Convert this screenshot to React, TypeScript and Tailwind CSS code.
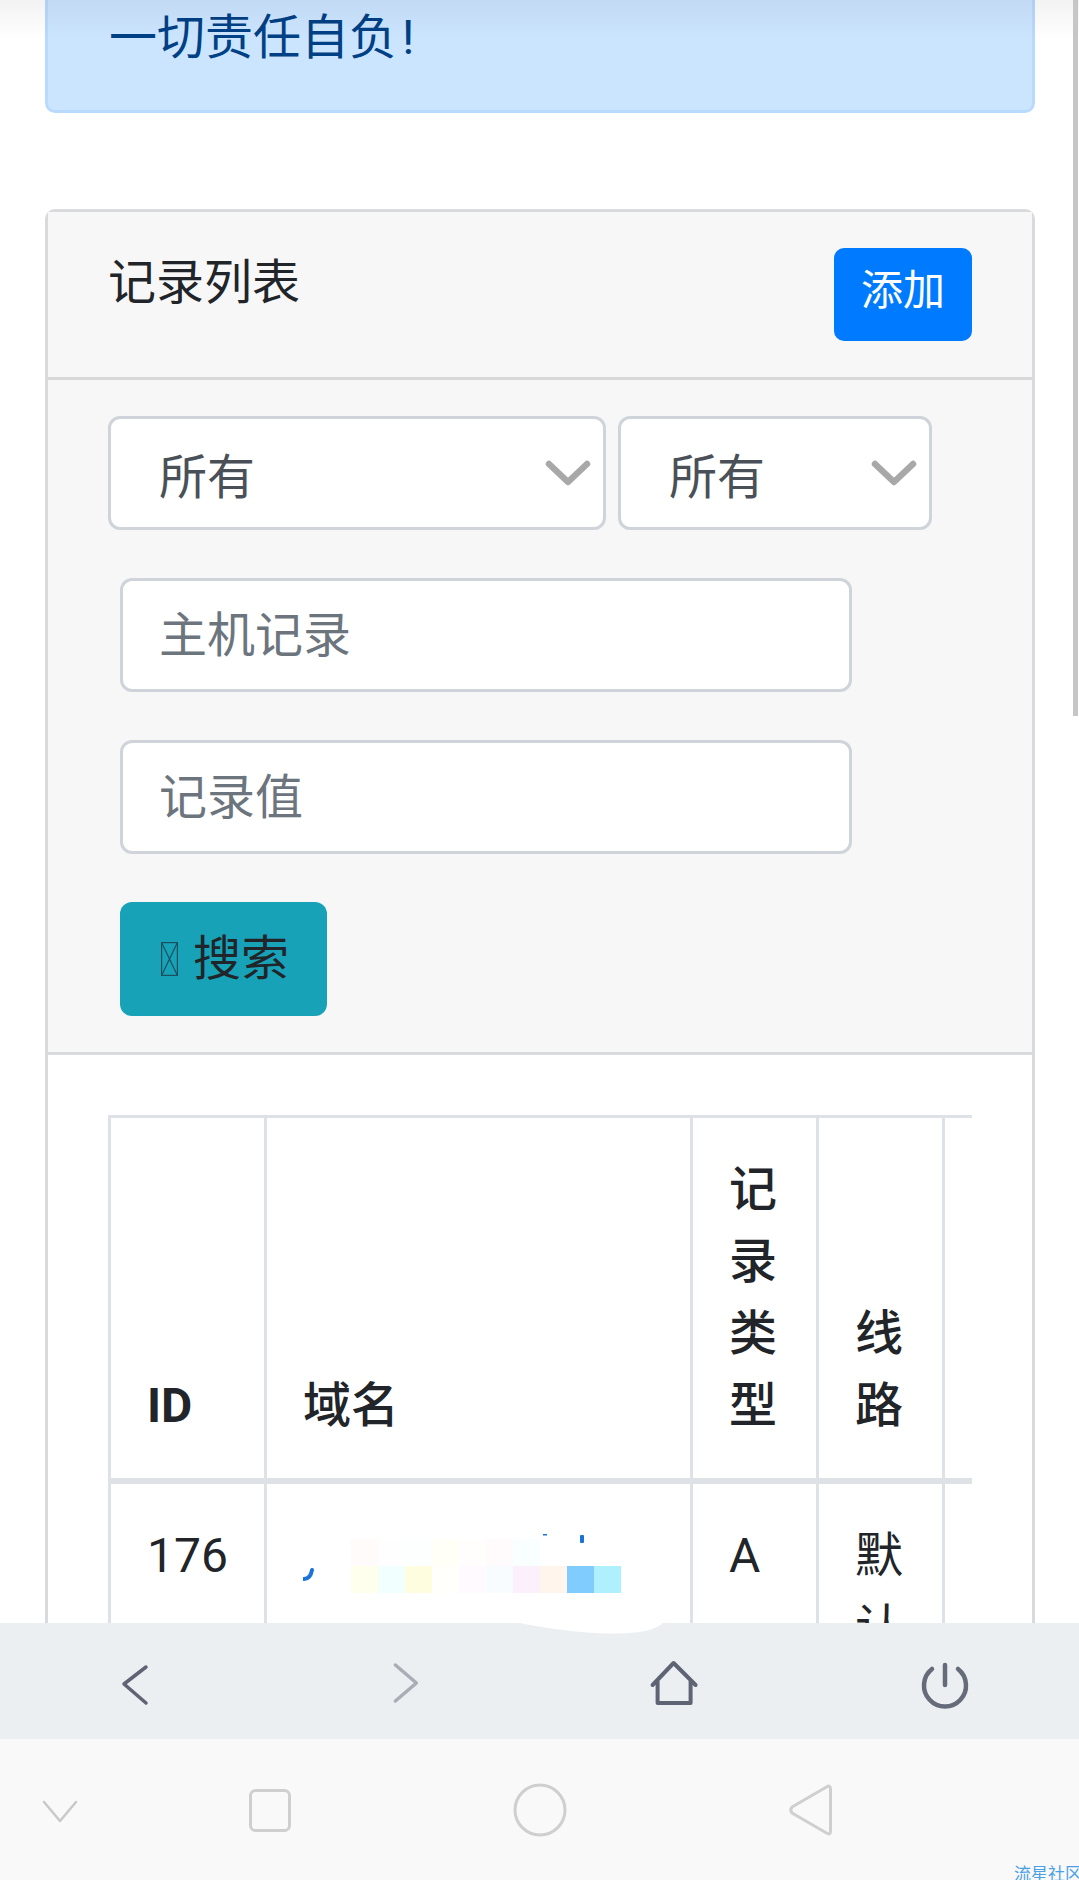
import React from "react";

const Chevron = () => (
  <svg className="pointer-events-none absolute top-[44px] right-[15px]" width="46" height="26" viewBox="0 0 46 26" fill="none">
    <path d="M4 4 L23 22 L42 4" stroke="#a8a8a8" strokeWidth="6.500" strokeLinecap="round" strokeLinejoin="round" />
  </svg>
);

const SelectBox = ({ width }: { width: string }) => (
  <div className={`relative ${width}`}>
    <select className="h-[114px] w-full appearance-none rounded-[12px] border-[3px] border-[#ced4da] bg-white pt-[9px] pl-[48px] text-[48px] leading-[72px] text-[#495057] outline-none">
      <option>所有</option>
    </select>
    <Chevron />
  </div>
);

const TextInput = ({ placeholder }: { placeholder: string }) => (
  <input
    placeholder={placeholder}
    className="ml-[12px] block h-[114px] w-[732px] rounded-[12px] border-[3px] border-[#ced4da] bg-white pl-[36px] text-[48px] text-[#495057] outline-none placeholder:text-[#6c757d]"
  />
);

const mosaic: [number, number, string][] = [
  [47, 19, "#fffbfb"], [74, 19, "#fffefe"], [101, 19, "#fdfffe"], [128, 19, "#fffff8"], [155, 19, "#fffefc"], [182, 19, "#fffbfc"], [209, 19, "#f9ffff"],
  [47, 46, "#ffffee"], [74, 46, "#f1ffff"], [101, 46, "#fffde0"], [128, 46, "#fffffb"], [155, 46, "#fefaff"], [182, 46, "#f8fcff"], [209, 46, "#fdf0fd"], [236, 46, "#fff5ec"], [263, 46, "#80ccff"], [290, 46, "#aef0fd"],
];

export default function App() {
  return (
    <div className="relative flex h-[1880px] w-full flex-col overflow-hidden bg-white [font-family:Roboto,'Noto_Sans_CJK_SC',sans-serif]">
      <main className="h-[1623px] overflow-hidden pr-[44px] pl-[45px]">
        <div className="-mt-[37px] mb-[96px] h-[150px] rounded-[10px] border-[3px] border-[#b8daff] bg-[#cce5ff] px-[61px] py-[36px] text-[48px] leading-[72px] text-[#004085]">
          一切责任自负<span className="ml-[5px]">!</span>
        </div>

        <section className="rounded-[10px] border-[3px] border-[#d8dadd] bg-white">
          <header className="flex items-start justify-between border-b-[3px] border-[#d8d8d8] bg-[#f7f7f7] px-[60px] py-[36px]">
            <h2 className="-mt-px text-[48px] leading-[72px] text-[#212529]">记录列表</h2>
            <button className="h-[93px] w-[138px] rounded-[10px] bg-[#007bff] pb-[9px] text-[42px] text-white">添加</button>
          </header>

          <form className="flex flex-col gap-[48px] border-b-[3px] border-[#d8dadd] bg-[#f7f7f7] pt-[36px] pb-[36px] pl-[60px]">
            <div className="flex gap-[12px]">
              <SelectBox width="w-[498px]" />
              <SelectBox width="w-[314px]" />
            </div>
            <TextInput placeholder="主机记录" />
            <TextInput placeholder="记录值" />
            <button type="button" className="ml-[12px] flex h-[114px] w-[207px] items-center gap-[15px] rounded-[12px] bg-[#17a2b8] pl-[41px] text-[48px] text-[#212529]">
              <svg width="17" height="34" viewBox="0 0 17 34" fill="none" stroke="#1c4f5c" strokeWidth="1.2">
                <rect x="0.6" y="0.6" width="15.8" height="32.8" />
                <path d="M0.6 0.6 L16.4 33.4 M16.4 0.6 L0.6 33.4" />
              </svg>
              <span>搜索</span>
            </button>
          </form>

          <div className="m-[60px] mb-0 overflow-hidden">
            <table className="w-[1234px] table-fixed border-separate border-spacing-0 text-[48px] leading-[72px] text-[#212529]">
              <colgroup>
                <col className="w-[156px]" />
                <col className="w-[426px]" />
                <col className="w-[126px]" />
                <col className="w-[126px]" />
                <col className="w-[400px]" />
              </colgroup>
              <thead>
                <tr>
                  <th className="border-t-[3px] border-b-[6px] border-l-[3px] border-[#dee2e6] p-[36px] text-left align-bottom font-bold">ID</th>
                  <th className="border-t-[3px] border-b-[6px] border-l-[3px] border-[#dee2e6] p-[36px] text-left align-bottom font-medium">域名</th>
                  <th className="border-t-[3px] border-b-[6px] border-l-[3px] border-[#dee2e6] p-[36px] text-left align-bottom font-medium">记录类型</th>
                  <th className="border-t-[3px] border-b-[6px] border-l-[3px] border-[#dee2e6] p-[36px] text-left align-bottom font-medium">线路</th>
                  <th className="border-t-[3px] border-b-[6px] border-l-[3px] border-[#dee2e6] p-[36px]"></th>
                </tr>
              </thead>
              <tbody>
                <tr>
                  <td className="border-l-[3px] border-[#dee2e6] p-[36px] align-top">176</td>
                  <td className="border-l-[3px] border-[#dee2e6] p-[36px] align-top">
                    <svg className="block" width="320" height="80" viewBox="0 0 320 80" fill="none">
                      {mosaic.map(([x, y, c]) => (
                        <rect key={`${x}-${y}`} x={x + 1} y={y} width="27" height="27" fill={c} />
                      ))}
                      <path d="M9 50 C8 56 5 59 1 59" stroke="#1a73d8" strokeWidth="4" strokeLinecap="round" />
                      <rect x="240" y="14" width="4" height="1.5" fill="#1a73d8" />
                      <rect x="277" y="15" width="4" height="8" rx="1" fill="#1a73d8" />
                    </svg>
                  </td>
                  <td className="border-l-[3px] border-[#dee2e6] p-[36px] align-top">A</td>
                  <td className="border-l-[3px] border-[#dee2e6] p-[36px] align-top">默认</td>
                  <td className="border-l-[3px] border-[#dee2e6] p-[36px]"></td>
                </tr>
              </tbody>
            </table>
          </div>
        </section>
      </main>

      <nav className="relative grid h-[116px] shrink-0 grid-cols-4 place-items-center bg-[#eceff2] pt-[6px]">
        <svg className="absolute top-0 left-[520px]" width="143" height="11" viewBox="0 0 143 11" fill="#ffffff">
          <path d="M0 0 C40 8 70 10.500 95 10.500 C120 10.500 135 7 143 0 Z" />
        </svg>
        <svg width="60" height="60" viewBox="0 0 60 60" fill="none" stroke="#5f6374" strokeWidth="3.500" strokeLinecap="round" strokeLinejoin="round">
          <path d="M41 13 L19 30 L41 49" />
        </svg>
        <svg width="60" height="60" viewBox="0 0 60 60" fill="none" stroke="#a9adb5" strokeWidth="3.500" strokeLinecap="round" strokeLinejoin="round">
          <path d="M20.400 11 L41.400 29 L20.400 47" />
        </svg>
        <svg width="60" height="60" viewBox="0 0 60 60" fill="none" stroke="#5f6474" strokeWidth="4" strokeLinecap="round" strokeLinejoin="round">
          <path d="M8.600 31 L29.600 9 L51.600 31 M13.600 26 V49 H46.600 V26" />
        </svg>
        <svg width="60" height="60" viewBox="0 0 60 60" fill="none" stroke="#666b7a" strokeWidth="4.500" strokeLinecap="round">
          <path d="M31 11 V31 M18 15 A21 21 0 1 0 44 15" />
        </svg>
      </nav>

      <footer className="relative flex h-[141px] shrink-0 items-center bg-[#f9f9f9] pl-[30px]">
        <svg width="60" height="60" viewBox="0 0 60 60" fill="none" stroke="#c9c9c9" strokeWidth="2.500" strokeLinecap="round" strokeLinejoin="round">
          <path d="M14 22 L30 41 L46 22" />
        </svg>
        <svg className="ml-[150px]" width="60" height="60" viewBox="0 0 60 60" fill="none" stroke="#cfcfcf" strokeWidth="3">
          <rect x="10.500" y="10.500" width="39" height="40" rx="5" />
        </svg>
        <svg className="ml-[210px]" width="60" height="60" viewBox="0 0 60 60" fill="none" stroke="#cfcfcf" strokeWidth="3">
          <circle cx="30" cy="30" r="25" />
        </svg>
        <svg className="ml-[210px]" width="60" height="60" viewBox="0 0 60 60" fill="none" stroke="#cfcfcf" strokeWidth="3" strokeLinejoin="round">
          <path d="M46.500 7 Q50.500 4.500 50.500 9 V51 Q50.500 55.500 46.500 53 L12 33 Q9.500 30 12 27 Z" />
        </svg>
        <span className="absolute right-[-3px] bottom-[-4px] text-[17px] leading-[20px] whitespace-nowrap text-[#4a9fe6]">流星社区</span>
      </footer>

      <div className="pointer-events-none absolute top-0 left-0 h-[40px] w-full bg-gradient-to-b from-black/5 to-transparent"></div>
      <div className="pointer-events-none absolute top-0 right-[1px] h-[716px] w-[5px] bg-[#c6c6c6]"></div>
    </div>
  );
}
